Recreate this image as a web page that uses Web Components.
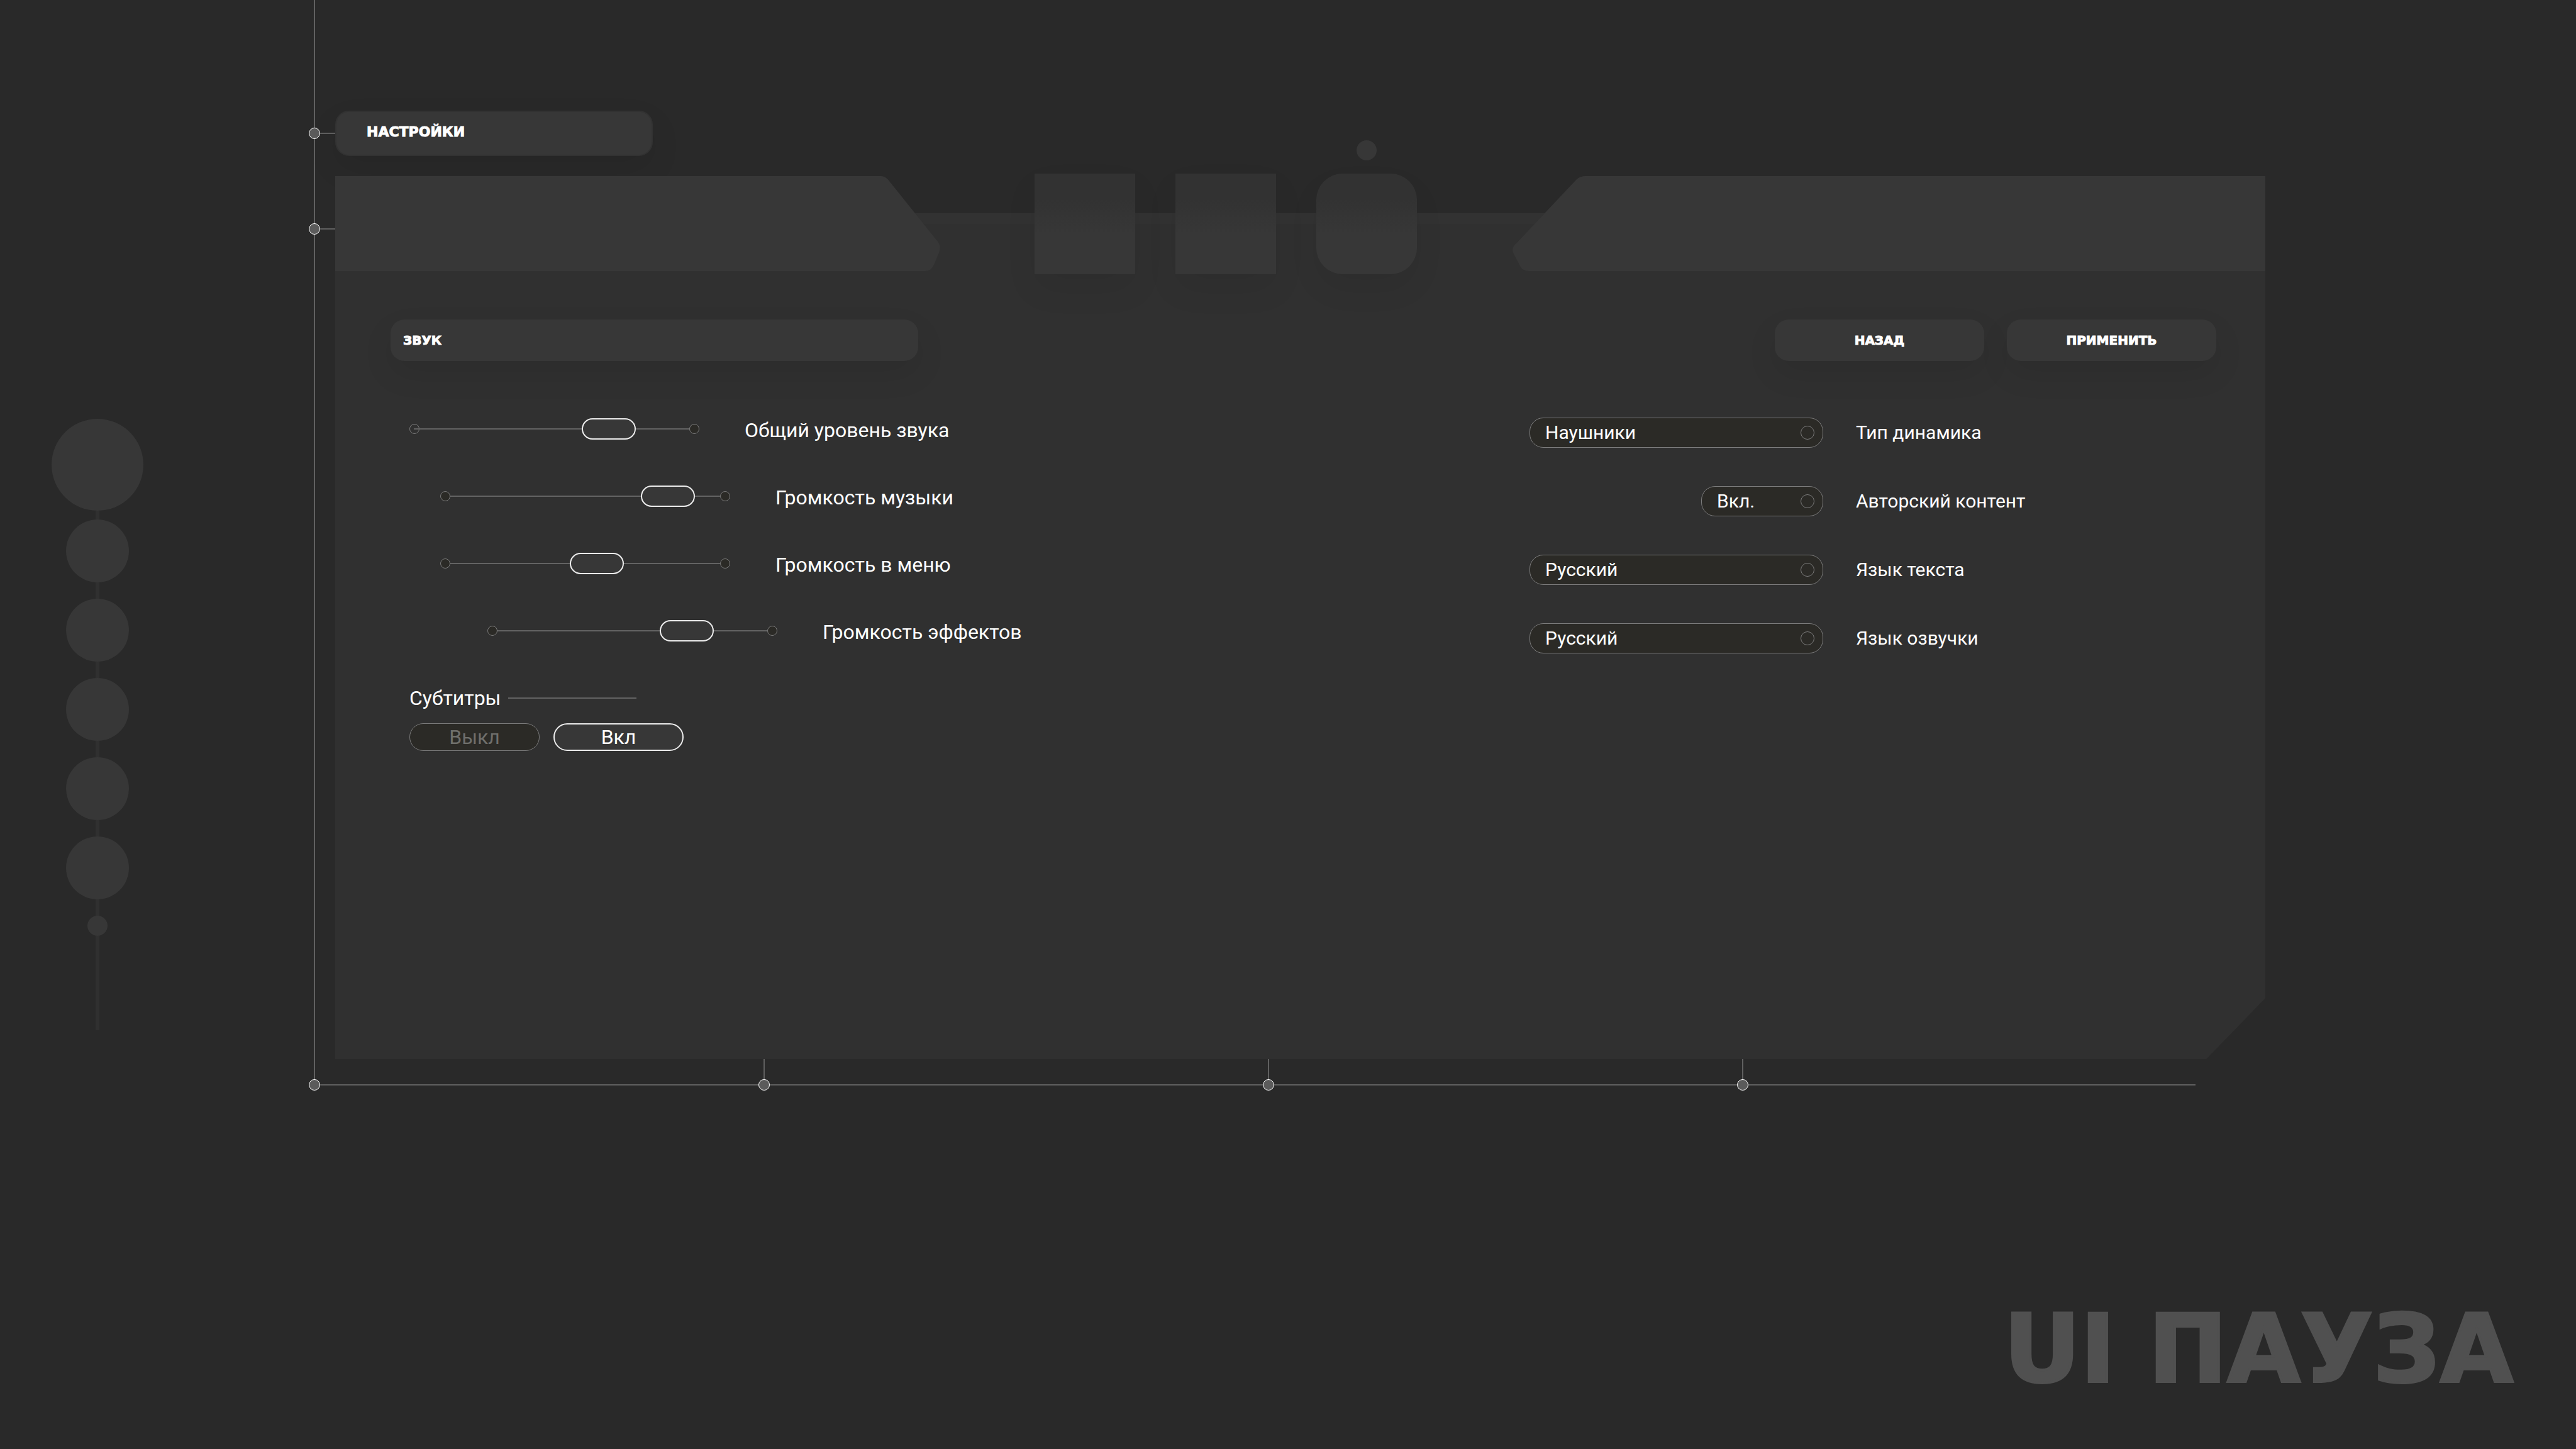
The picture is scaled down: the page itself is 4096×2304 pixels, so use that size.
<!DOCTYPE html>
<html lang="ru">
<head>
<meta charset="utf-8">
<title>Пауза</title>
<style>
  body { margin: 0; background: #292929; color: #fff; font-family: Roboto, "Noto Sans", sans-serif; }
</style>
</head>
<body>
<pause-screen></pause-screen>

<script>
const define = (name, html, setup) => {
  const tpl = document.createElement('template');
  tpl.innerHTML = html;
  customElements.define(name, class extends HTMLElement {
    constructor() {
      super();
      this.attachShadow({ mode: 'open' }).append(tpl.content.cloneNode(true));
    }
    connectedCallback() { if (setup) setup(this, this.shadowRoot); }
  });
};

/* Round joint on the frame lines */
define('frame-node', `
<style>
  :host { display: block; flex: none; box-sizing: border-box; width: 18px; height: 18px;
    border: 1px solid #fff; border-radius: 50%; background: #5b5b5b; }
</style>`);

/* Chain of round slots on the left */
define('chain-rail', `
<style>
  :host { display: flex; flex-direction: column; align-items: center; }
  i { display: block; flex: none; background: #373737; border-radius: 50%; width: 100px; height: 100px; }
  i.big { width: 146px; height: 146px; }
  i.dot { width: 32px; height: 32px; }
  b { display: block; flex: none; width: 6px; height: 26px; background: #303030; }
  b.first { height: 14px; }
  b.tail { height: 150px; }
</style>
<i class="big"></i><b class="first"></b>
<i></i><b></b><i></i><b></b><i></i><b></b><i></i><b></b><i></i><b></b>
<i class="dot"></i><b class="tail"></b>`);

/* Heading plate */
define('title-plate', `
<style>
  :host { display: flex; align-items: center; box-sizing: border-box; height: 66px; border-radius: 22px;
    background: #373737; box-shadow: 0 20px 50px rgba(0,0,0,.08);
    font: 700 20px/24px "DejaVu Sans", sans-serif; -webkit-text-stroke: 1px #fff; }
  ::slotted(h2) { margin: 0; font: inherit; }
</style>
<slot></slot>`);

define('plate-button', `
<style>
  :host { display: block; }
  button { display: block; box-sizing: border-box; width: 333px; height: 66px; padding: 0; border: 0;
    border-radius: 22px; background: #373737; color: #fff; box-shadow: 0 20px 50px rgba(0,0,0,.08);
    font: 700 20px/24px "DejaVu Sans", sans-serif; -webkit-text-stroke: 1px #fff; }
</style>
<button type="button"><slot></slot></button>`);

/* Category tabs between the two header wings */
define('panel-header', `
<style>
  :host { display: flex; align-items: center; justify-content: space-between; height: 151px; }
  svg { display: block; flex: none; fill: #373737; }
  nav { display: flex; gap: 64px; }
  .tab { position: relative; }
  button { display: block; width: 160px; height: 160px; padding: 0; border: 0;
    background: linear-gradient(#323232 25%, #373737 60%); box-shadow: 0 24px 50px rgba(0,0,0,.06); }
  .current button { border-radius: 42px; }
  .current::before { content: ""; position: absolute; left: 64px; bottom: 181px;
    width: 32px; height: 32px; border-radius: 50%; background: #373737; }
</style>
<svg width="962" height="151" viewBox="0 0 962 151"><path d="M0 0H868Q875 0 881 8L958 104Q964 112 960 122L952 141Q948 151 938 151H0Z"/></svg>
<nav>
  <div class="tab"><button type="button" aria-label="Управление"></button></div>
  <div class="tab"><button type="button" aria-label="Графика"></button></div>
  <div class="tab current"><button type="button" aria-label="Звук"></button></div>
</nav>
<svg width="1200" height="151" viewBox="-1 0 1200 151"><path d="M1199 0H118Q110 0 104 5L8 107Q-1 114 4 124L14 143Q18 151 28 151H1199Z"/></svg>`);

/* Volume slider with its label */
define('volume-slider', `
<style>
  :host { display: flex; align-items: center; gap: 72px; height: 36px; }
  .rail { display: grid; align-items: center; width: 461px; flex: none; }
  .rail > * { grid-area: 1 / 1; }
  .end { box-sizing: border-box; width: 16px; height: 16px; border: 1px solid #7a7a7a; border-radius: 50%; background: #2b2a26; }
  .right { justify-self: end; }
  .line { height: 2px; margin: 0 16px; background: #636363; }
  :host([open]) .left { background: none; }
  :host([open]) .line { margin-left: 7px; }
  input { appearance: none; -webkit-appearance: none; width: 461px; height: 34px; margin: 0; background: none; }
  input::-webkit-slider-thumb { -webkit-appearance: none; box-sizing: border-box; width: 86px; height: 34px;
    border: 2px solid #ececec; border-radius: 17px; background: #373737; }
  label { font-size: 32px; line-height: 36px; padding-top: 4px; white-space: nowrap; }
</style>
<div class="rail">
  <i class="end left"></i><i class="end right"></i><i class="line"></i>
  <input id="v" type="range" min="0" max="100">
</div>
<label for="v"><slot></slot></label>`,
(host, root) => { root.getElementById('v').value = host.getAttribute('value'); });

/* On/off pair under its caption */
define('on-off-switch', `
<style>
  :host { display: grid; gap: 22px; justify-items: start; }
  .head { display: flex; align-items: center; gap: 12px; font-size: 32px; line-height: 36px; }
  .head i { width: 204px; height: 2px; background: #636363; }
  .pair { display: flex; gap: 22px; }
  button { box-sizing: border-box; width: 207px; height: 44px; padding: 0; border: 1px solid #7a7a7a; border-radius: 22px;
    background: #2b2a26; color: #6f6f6c; font: 32px/40px Roboto, sans-serif; }
  button[aria-pressed="true"] { border: 2px solid #ececec; background: #373737; color: #fff; }
</style>
<div class="head"><slot></slot><i></i></div>
<div class="pair">
  <button type="button" aria-pressed="false">Выкл</button>
  <button type="button" aria-pressed="true">Вкл</button>
</div>`);

/* Drop-down with its label */
define('option-field', `
<style>
  :host { display: grid; grid-template-columns: 467px auto; justify-content: start; align-items: center; gap: 52px; height: 48px; }
  .box { display: grid; align-items: center; justify-self: end; width: 100%; }
  :host([compact]) .box { width: 194px; }
  .box > * { grid-area: 1 / 1; }
  select { appearance: none; -webkit-appearance: none; box-sizing: border-box; width: 100%; height: 48px; margin: 0;
    padding: 0 48px 0 24px; border: 1px solid #7c7c7c; border-radius: 22px; background: #2b2a26; color: #fff;
    font: 30px/46px Roboto, sans-serif; }
  i { box-sizing: border-box; justify-self: end; width: 22px; height: 22px; margin-right: 14px;
    border: 1px solid #7c7c7c; border-radius: 50%; pointer-events: none; }
  label { font-size: 30px; line-height: 48px; white-space: nowrap; }
</style>
<div class="box"><select id="s"><option></option></select><i></i></div>
<label for="s"><slot></slot></label>`,
(host, root) => { root.querySelector('option').textContent = host.getAttribute('value'); });

/* Sound settings panel */
define('sound-panel', `
<style>
  :host { display: block; box-sizing: border-box; padding-bottom: 490px;
    background: linear-gradient(#0000 59px, #323232 59px 76px, #303030 76px);
    clip-path: polygon(0 -100px, 100% -100px, 100% calc(100% - 97px), calc(100% - 94px) 100%, 0 100%); }
  .bar { display: flex; gap: 36px; padding: 77px 78px 0 88px; }
  .bar title-plate { width: 839px; padding-left: 20px; margin-right: auto; }
  .columns { display: grid; grid-template-columns: 1fr 1170px; align-items: start; padding-top: 90px; }
  .levels { display: grid; gap: 71px; padding-left: 118px; }
  .near { margin-left: 49px; }
  .far { margin-left: 124px; }
  .options { display: grid; gap: 61px; }
</style>
<panel-header></panel-header>
<div class="bar">
  <title-plate><h2>ЗВУК</h2></title-plate>
  <plate-button>НАЗАД</plate-button>
  <plate-button>ПРИМЕНИТЬ</plate-button>
</div>
<div class="columns">
  <div class="levels">
    <volume-slider value="73" open>Общий уровень звука</volume-slider>
    <volume-slider class="near" value="85">Громкость музыки</volume-slider>
    <volume-slider class="near" value="55">Громкость в меню</volume-slider>
    <volume-slider class="far" value="73">Громкость эффектов</volume-slider>
    <on-off-switch>Субтитры</on-off-switch>
  </div>
  <div class="options">
    <option-field value="Наушники">Тип динамика</option-field>
    <option-field value="Вкл." compact>Авторский контент</option-field>
    <option-field value="Русский">Язык текста</option-field>
    <option-field value="Русский">Язык озвучки</option-field>
  </div>
</div>`);

/* Whole screen: rail, framed panel, caption */
define('pause-screen', `
<style>
  :host { display: grid; grid-template-columns: 228px 1fr; grid-template-rows: auto 1fr; column-gap: 271px; min-height: 100vh; }
  chain-rail { padding: 666px 0 0 82px; }
  .frame { margin-right: 494px; padding-top: 176px; border-left: 2px solid #606060; }
  .row { display: flex; align-items: center; margin-left: -10px; }
  .row.top { align-items: flex-start; margin-top: 32px; }
  .row.top frame-node { margin-top: 75px; }
  .row.top .stub { margin-top: 83px; }
  .stub { flex: none; width: 24px; height: 2px; background: #606060; }
  .row title-plate { box-sizing: border-box; width: 505px; height: 72px; padding: 0 0 4px 48px; border: 2px solid #323232; font-size: 22px; }
  sound-panel { flex: 1; min-width: 0; }
  .axis { display: grid; }
  .axis > * { grid-area: 1 / 1; }
  .line { align-self: end; height: 2px; margin: 0 111px 8px 0; background: #606060; }
  .ticks { display: grid; grid-template-columns: 715fr 802fr 754fr 830fr; }
  .tick { display: flex; flex-direction: column; align-items: center; justify-content: flex-end; width: 18px; height: 50px; margin-left: -10px; }
  .tick i { width: 2px; height: 32px; background: #606060; }
  h1 { grid-column: 1 / -1; align-self: end; justify-self: end; margin: 0; padding: 0 100px 84px 0;
    font: 700 150px/150px "DejaVu Sans", sans-serif; color: #505050; -webkit-text-stroke: 4px #505050; }
</style>
<chain-rail></chain-rail>
<div class="frame">
  <div class="row"><frame-node></frame-node><i class="stub"></i><title-plate><h2>НАСТРОЙКИ</h2></title-plate></div>
  <div class="row top"><frame-node></frame-node><i class="stub"></i><sound-panel></sound-panel></div>
  <div class="axis">
    <i class="line"></i>
    <div class="ticks">
      <div class="tick"><frame-node></frame-node></div>
      <div class="tick"><i></i><frame-node></frame-node></div>
      <div class="tick"><i></i><frame-node></frame-node></div>
      <div class="tick"><i></i><frame-node></frame-node></div>
    </div>
  </div>
</div>
<h1>UI ПАУЗА</h1>`);
</script>
</body>
</html>
